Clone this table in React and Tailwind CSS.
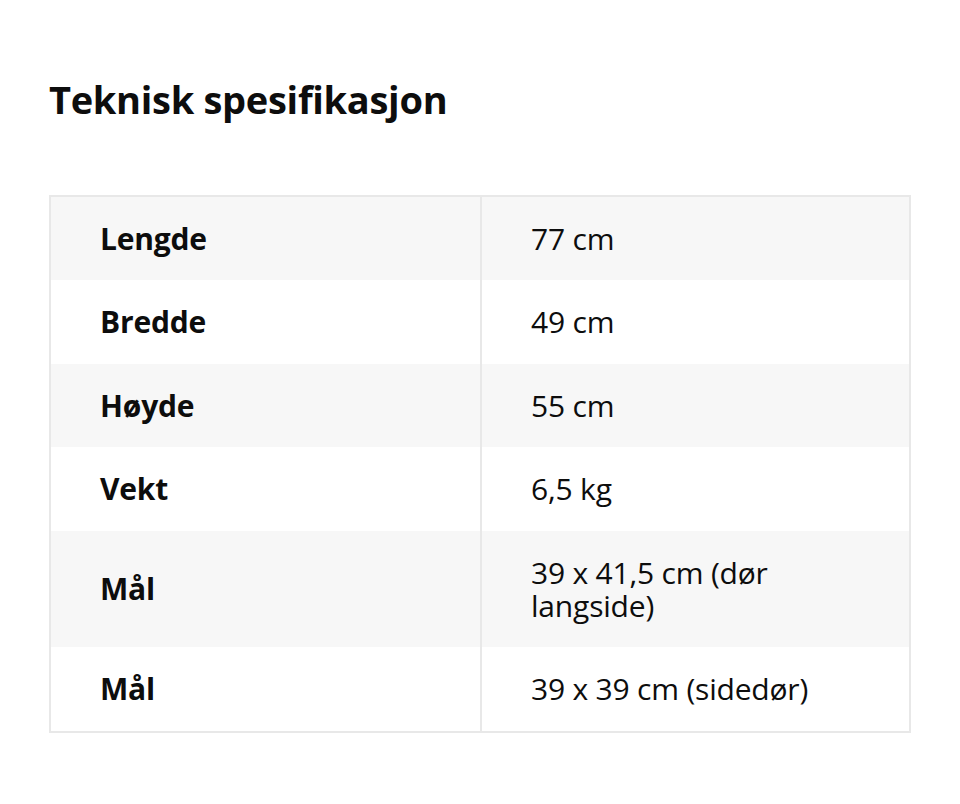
import React from 'react';

const specs = [
  { label: 'Lengde', value: '77 cm' },
  { label: 'Bredde', value: '49 cm' },
  { label: 'Høyde', value: '55 cm' },
  { label: 'Vekt', value: '6,5 kg' },
  { label: 'Mål', value: '39 x 41,5 cm (dør langside)' },
  { label: 'Mål', value: '39 x 39 cm (sidedør)' },
];

export default function App() {
  return (
    <div className="min-h-[804px] w-[960px] bg-white px-[49px] pt-[74px] text-[#0d0d0d] font-['Open_Sans',sans-serif]">
      <h1 className="text-[38px] font-bold leading-[50px] tracking-[-0.3px]">Teknisk spesifikasjon</h1>

      {/* spec table */}
      <div className="mt-[71px] w-[862px] border-2 border-[#e8e8e8]">
        {specs.map((row, i) => (
          <div
            key={i}
            className={`grid grid-cols-[431px_1fr] ${i % 2 === 0 ? 'bg-[#f7f7f7]' : 'bg-white'}`}
          >
            <div className="flex items-center border-r-2 border-[#e8e8e8] py-[25px] pl-[49px] text-[30px] font-bold leading-[33.4px] tracking-[-0.2px]">
              {row.label}
            </div>
            <div className="flex items-center py-[25px] pl-[49px] pr-[60px] text-[30px] leading-[33.4px] tracking-[-0.2px]">
              {row.value}
            </div>
          </div>
        ))}
      </div>
    </div>
  );
}
